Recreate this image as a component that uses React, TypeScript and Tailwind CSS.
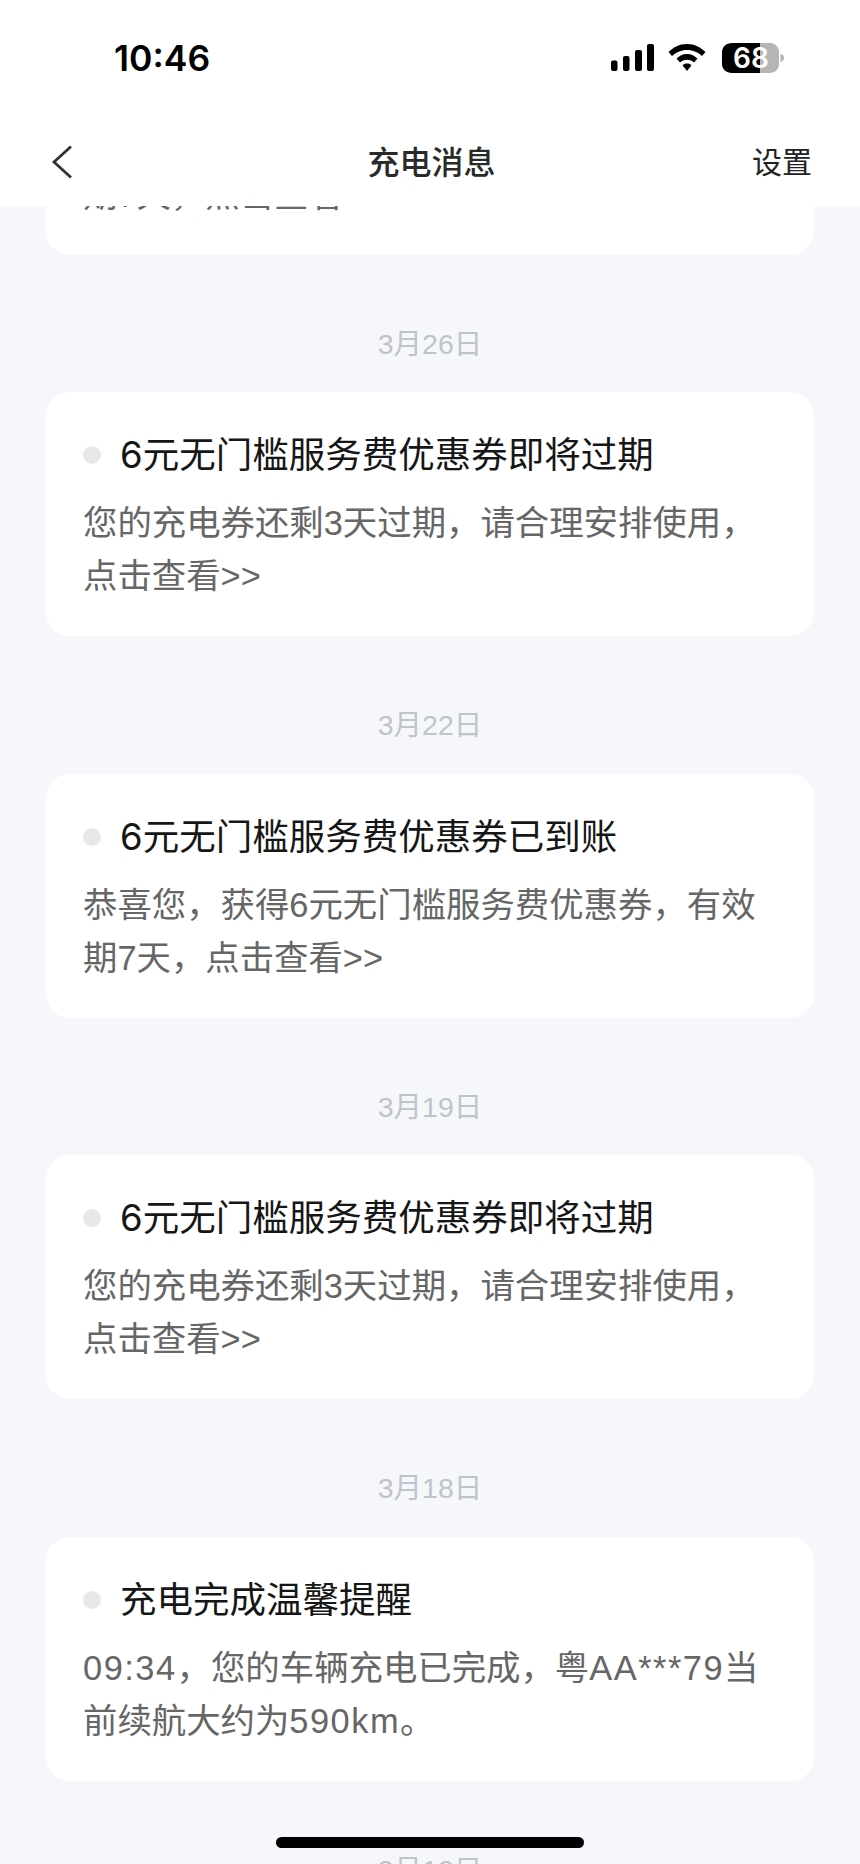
import type { ReactNode } from 'react';

const fontStack = '[font-family:"Liberation_Sans","Noto_Sans_CJK_SC",sans-serif]';
const titleFont = '[font-family:Inter,"Noto_Sans_CJK_SC",sans-serif]';

const messages: { date: string; title: string; body: ReactNode }[] = [
  { date: '', title: '6元无门槛服务费优惠券已到账', body: '恭喜您，获得6元无门槛服务费优惠券，有效期7天，点击查看>>' },
  { date: '3月26日', title: '6元无门槛服务费优惠券即将过期', body: '您的充电券还剩3天过期，请合理安排使用，点击查看>>' },
  { date: '3月22日', title: '6元无门槛服务费优惠券已到账', body: '恭喜您，获得6元无门槛服务费优惠券，有效期7天，点击查看>>' },
  { date: '3月19日', title: '6元无门槛服务费优惠券即将过期', body: '您的充电券还剩3天过期，请合理安排使用，点击查看>>' },
  {
    date: '3月18日',
    title: '充电完成温馨提醒',
    body: (
      <>
        <span className="tracking-[1.500px]">09:34</span>，您的车辆充电已完成，粤
        <span className="tracking-[1.500px]">AA***79</span>当前续航大约为
        <span className="tracking-[1.500px]">590km</span>。
      </>
    ),
  },
];

function StatusIcons() {
  return (
    <svg width="176" height="32" viewBox="0 0 176 32" className="block">
      <rect x="2" y="17.500" width="6.500" height="10.500" rx="2" fill="#000" />
      <rect x="14" y="13" width="6.500" height="15" rx="2" fill="#000" />
      <rect x="26" y="7" width="7" height="21" rx="2" fill="#000" />
      <rect x="38" y="1" width="7" height="27" rx="2" fill="#000" />
      <path d="M78 1C70 1 65 4 59.500 9L63 13C67 9.500 72 7 78 7C84 7 89 9.500 93 13L96.500 9C91 4 86 1 78 1Z" fill="#000" />
      <path d="M78 11C73.500 11 70.500 13 67.500 15.500L71 19.500C73 17.800 75 16.800 78 16.800C81 16.800 83 17.800 85 19.500L88.500 15.500C85.500 13 82.500 11 78 11Z" fill="#000" />
      <path d="M78 20.500C76 20.500 74.800 21 73.500 22.200L78 28L82.500 22.200C81.200 21 80 20.500 78 20.500Z" fill="#000" />
      <path d="M123 0H151V30H123C117 30 113 26 113 21V9C113 4 117 0 123 0Z" fill="#000" />
      <path d="M151 0H161C166 0 170 4 170 9V21C170 26 166 30 161 30H151Z" fill="#b5b5b5" />
      <path d="M171.500 11C174 11.500 175 13 175 15C175 17 174 18.500 171.500 19Z" fill="#b5b5b5" />
    </svg>
  );
}

function MessageCard({ title, body }: { title: string; body: ReactNode }) {
  return (
    <div className="h-[244px] rounded-[24px] bg-white pl-[37px] pr-[50px] pt-[41px]">
      <div className="flex h-[44px] items-center">
        <span className="h-[18px] w-[18px] shrink-0 rounded-full bg-[#e8e8e8]" />
        <span className={`ml-[19px] text-[36.500px] leading-[44px] font-normal whitespace-nowrap text-[#161616] ${titleFont}`}>{title}</span>
      </div>
      <p className="mt-[20px] text-[34.400px] leading-[53px] text-[#666666]">{body}</p>
    </div>
  );
}

export default function App() {
  return (
    <div className={`relative h-[1864px] w-[860px] overflow-hidden bg-[#f5f7fb] ${fontStack}`}>
      <header className="relative z-10 h-[206px] bg-white">
        <div className={`flex h-[116px] items-start justify-between pl-[114px] pr-[75px] pt-[43px] ${titleFont}`}>
          <span className="mt-[1px] text-[35.500px] leading-[30px] font-semibold text-black">10:46</span>
          <div className="relative">
            <StatusIcons />
            <span className="absolute left-[117px] top-[0px] w-[50px] text-center text-[28px] leading-[30px] font-semibold text-white">68</span>
          </div>
        </div>
        <div className="grid h-[90px] grid-cols-3 items-start pl-[51px] pr-[48px] pt-[24px]">
          <svg width="22" height="34" viewBox="0 0 22 34" fill="none" className="mt-[5px]">
            <path d="M20 1.500L3 17L20 32.500" stroke="#333" strokeWidth="2.800" />
          </svg>
          <h1 className="text-center text-[32px] leading-[46px] font-medium whitespace-nowrap text-[#2a2a2a]">充电消息</h1>
          <span className="text-right text-[30px] leading-[46px] text-[#222222]">设置</span>
        </div>
      </header>

      <main className="mt-[-195.400px] px-[46px]">
        {messages.map((m, index) => (
          <section key={index}>
            {index > 0 && (
              <div className="flex h-[137.600px] items-start justify-center pt-[68px] text-[28.500px] leading-[42px] text-[#bfc3cb]">
                {m.date}
              </div>
            )}
            <MessageCard title={m.title} body={m.body} />
          </section>
        ))}
        <div className="flex justify-center pt-[68px] text-[28.500px] leading-[42px] text-[#bfc3cb]">3月12日</div>
      </main>

      <div className="absolute bottom-[16px] left-[276px] h-[11px] w-[308px] rounded-full bg-black" />
    </div>
  );
}
